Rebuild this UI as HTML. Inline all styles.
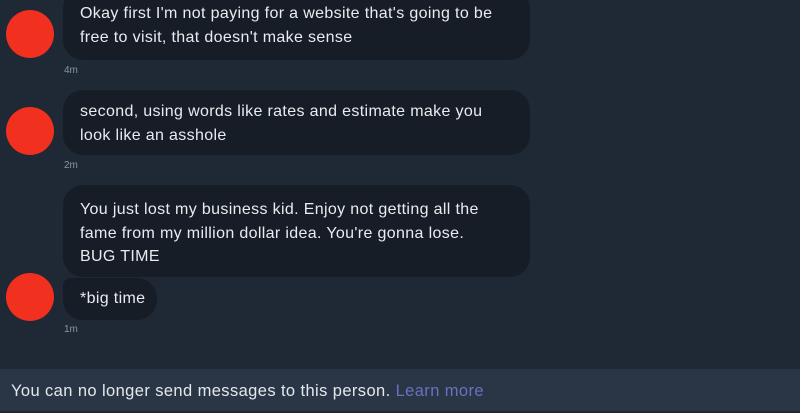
<!DOCTYPE html><html><head><style>
body{margin:0;width:800px;height:411px;background:#1e2935;position:relative;overflow:hidden;font-family:"Liberation Sans",sans-serif;color:#e8ecef}
.b{position:absolute;background:#161d26;border-radius:20px;font-size:16px;letter-spacing:0.35px;line-height:23.5px;padding:0 17px;box-sizing:border-box;white-space:nowrap}
.av{position:absolute;width:48px;height:48px;border-radius:50%;background:#f2301f;left:6px}
.t{position:absolute;font-size:10px;color:#8a96a3;left:64px}
.bar{position:absolute;left:0;top:369px;width:800px;height:42px;background:#2a3645;font-size:16.5px;letter-spacing:0.4px;line-height:44px;padding-left:11px;color:#e4e8ec}
</style></head><body>
<div class="b" style="left:63px;top:-12px;width:467px;height:72px"><div style="padding-top:14px">Okay first I'm not paying for a website that's going to be<br>free to visit, that doesn't make sense</div></div>
<div class="av" style="top:10px"></div>
<div class="t" style="top:65px">4m</div>
<div class="b" style="left:63px;top:90px;width:467px;height:65px"><div style="padding-top:10px">second, using words like rates and estimate make you<br>look like an asshole</div></div>
<div class="av" style="top:107px"></div>
<div class="t" style="top:160px">2m</div>
<div class="b" style="left:63px;top:185px;width:467px;height:92px"><div style="padding-top:13px">You just lost my business kid. Enjoy not getting all the<br>fame from my million dollar idea. You're gonna lose.<br>BUG TIME</div></div>
<div class="b" style="left:63px;top:278px;width:94px;height:42px;border-radius:8px 20px 20px 20px;padding:0 0 0 17px"><div style="padding-top:9px">*big time</div></div>
<div class="av" style="top:273px"></div>
<div class="t" style="top:324px">1m</div>
<div class="bar">You can no longer send messages to this person. <span style="color:#6a6fc4">Learn more</span></div>
</body></html>
